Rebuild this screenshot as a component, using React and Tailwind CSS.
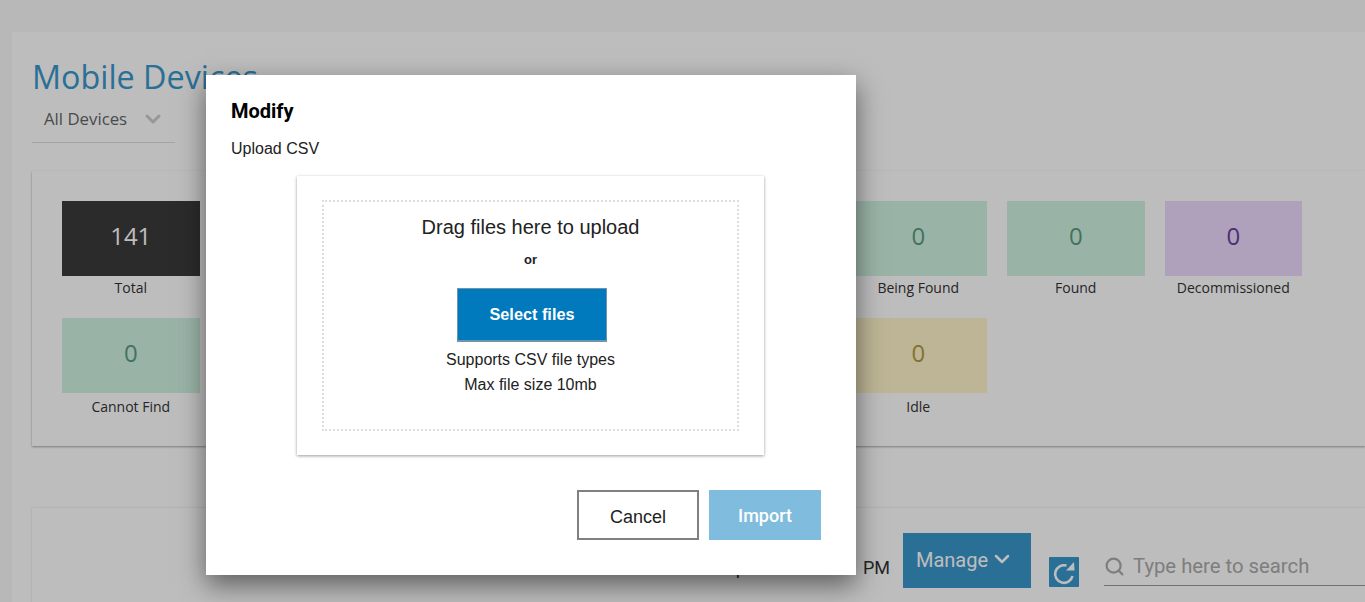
import React from 'react';
import { ChevronDown, Search } from 'lucide-react';

const tiles = [
  { label: 'Total', value: '141', box: 'bg-[#3a3a3a] text-white' },
  { empty: true },
  { empty: true },
  { empty: true },
  { empty: true },
  { label: 'Being Found', value: '0', box: 'bg-[#d0f2e2] text-[#5c9a80]' },
  { label: 'Found', value: '0', box: 'bg-[#d0f2e2] text-[#5c9a80]' },
  { label: 'Decommissioned', value: '0', box: 'bg-[#edd8fd] text-[#6b3f9c]' },
  { label: 'Cannot Find', value: '0', box: 'bg-[#d0f2e2] text-[#5c9a80]', gap: 'mt-[4px]' },
  { empty: true },
  { empty: true },
  { empty: true },
  { empty: true },
  { label: 'Idle', value: '0', box: 'bg-[#fff5c9] text-[#b39a45]', gap: 'mt-[4px]' },
];

const Tile = ({ tile }) => {
  if (tile.empty) return <div className="h-[117px]" />;
  return (
    <div className="h-[117px] flex flex-col items-center">
      <div className={`w-full h-[75px] pb-[6px] flex items-center justify-center text-[24px] ${tile.box}`}>{tile.value}</div>
      <div className={`${tile.gap || 'mt-[2px]'} text-[14px] leading-[20px] text-[#333]`}>{tile.label}</div>
    </div>
  );
};

const App = () => {
  return (
    <div className="relative h-[602px] overflow-hidden bg-[#f9f9f9] font-['Open_Sans',sans-serif]">
      {/* page behind the dialog */}
      <div className="ml-3 pt-8 h-full">
        <div className="bg-white h-full pl-5 pt-[23px]">
          <h1 className="text-[32.3px] leading-[42px] text-[#3996cb]">Mobile Devices</h1>
          <div className="mt-[3px] w-[143px] h-[43px] border-b border-[#ddd] flex items-center pl-3 pb-[5px]">
            <span className="text-[16.8px] text-[#666]">All Devices</span>
            <ChevronDown className="ml-[14px] h-6 w-6 text-[#ccc]" strokeWidth={3} />
          </div>

          <div className="mt-[28px] bg-white shadow-[0_1px_2px_rgba(0,0,0,0.35)] h-[275px] pl-[30px] pt-[30px]">
            <div className="grid grid-cols-8 gap-x-[20px] w-[1240px]">
              {tiles.map((tile, i) => <Tile key={i} tile={tile} />)}
            </div>
          </div>

          <div className="mt-[62px] bg-white shadow-[0_0_2px_rgba(0,0,0,0.15)] h-[120px] pt-[25px] flex items-start justify-end font-['Roboto',sans-serif]">
            <span className="mt-[23px] mr-[117px] text-[18px] leading-[24px] text-[#1a2a5a]">p</span>
            <span className="mt-[23px] mr-[13px] text-[18px] leading-[24px] text-[#333]">PM</span>
            <button className="w-[128px] h-[55px] bg-[#3996cb] text-white text-[20px] flex items-start justify-center pt-[12px] pr-[4px]">
              Manage
              <ChevronDown className="ml-[2px] mt-[2px] h-6 w-6" strokeWidth={2.5} />
            </button>
            <div className="ml-[18px] mt-[24px] w-[30px] h-[30px] bg-[#3996cb] rounded-[1px]">
              <svg viewBox="0 0 30 30" className="h-[30px] w-[30px] text-white" fill="none">
                <path d="M23.5 19A8.8 8.8 0 1 1 17.5 8.6" stroke="currentColor" strokeWidth="2.6" />
                <polygon points="25,5 25.5,13.5 17,13.5" fill="currentColor" />
              </svg>
            </div>
            <div className="ml-[25px] mt-[18px] w-[261px] h-[35px] border-b border-[#999] pb-[3px] flex items-center text-[#aaa]">
              <Search className="h-[21px] w-[21px]" strokeWidth={2.5} />
              <span className="ml-[8px] text-[20.3px]">Type here to search</span>
            </div>
          </div>
        </div>
      </div>

      {/* backdrop */}
      <div className="absolute inset-0 bg-black/26" />

      {/* dialog */}
      <div className="absolute left-[206px] top-[75px] w-[650px] h-[500px] bg-white shadow-[0_10px_25px_rgba(0,0,0,0.5)] px-[25px] font-['Liberation_Sans',sans-serif]">
        <h2 className="mt-[24px] text-[20px] leading-[24px] font-bold text-black font-['Roboto',sans-serif]">Modify</h2>
        <p className="mt-[16px] text-[16px] leading-[20px] text-[#222]">Upload CSV</p>

        <div className="ml-[66px] mt-[17px] w-[467px] h-[279px] bg-white shadow-[0_1px_3px_rgba(0,0,0,0.4)] pt-[24px] pl-[25px]">
          <div className="w-[417px] h-[231px] border-2 border-dotted border-[#ddd] flex flex-col items-center pt-[12px] text-[#222]">
            <div className="text-[20px] leading-[26px]">Drag files here to upload</div>
            <div className="mt-[12px] text-[13px] leading-[16px] font-bold">or</div>
            <button className="mt-[20px] ml-[2px] w-[150px] h-[54px] pl-px bg-[#0079bd] border border-b-2 border-[#6f95ab] text-white text-[16.3px] font-bold">Select files</button>
            <div className="mt-[5px] text-[16px] leading-[25px] text-center">
              <div>Supports CSV file types</div>
              <div>Max file size 10mb</div>
            </div>
          </div>
        </div>

        <div className="mt-[35px] mr-[10px] flex justify-end gap-[10px]">
          <button className="w-[122px] h-[50px] pt-[5px] border-2 border-[#808080] bg-white text-[18px] text-[#222]">Cancel</button>
          <button className="w-[112px] h-[50px] bg-[#80bcdd] text-white text-[18px] font-medium font-['Roboto',sans-serif]">Import</button>
        </div>
      </div>
    </div>
  );
};

export default App;
